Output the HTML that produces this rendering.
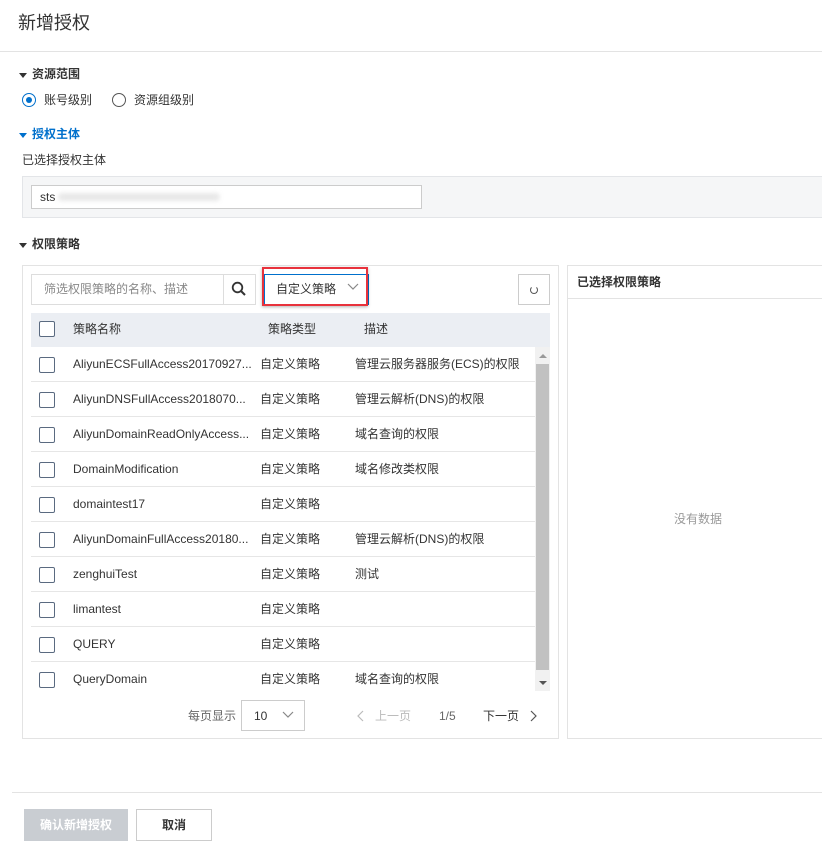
<!DOCTYPE html>
<html><head><meta charset="utf-8"><style>
*{box-sizing:border-box;margin:0;padding:0}
body{width:822px;height:846px;background:#fff;font-family:"Liberation Sans","Noto Sans CJK SC",sans-serif;font-size:12px;color:#333;position:relative;overflow:hidden}
.a{position:absolute;white-space:nowrap;line-height:16px}
.tri{position:absolute;width:0;height:0;border-left:4px solid transparent;border-right:4px solid transparent;border-top:5px solid #333}
.cb{position:absolute;width:16px;height:16px;border:1px solid #5a6a80;border-radius:2px;background:#fff}
.row{position:absolute;left:31px;width:504px;height:35px;border-bottom:1px solid #e6e6e6}
.row span{position:absolute;top:0;line-height:35px;height:35px;white-space:nowrap;font-size:12px;color:#333}
</style></head><body>
<div class="a" style="left:18px;top:12px;font-size:18px;line-height:22px;color:#333">新增授权</div>
<div class="a" style="left:0;top:51px;width:822px;height:1px;background:#e3e3e3"></div>

<div class="tri" style="left:19px;top:73px"></div>
<div class="a" style="left:32px;top:66px;font-weight:bold;font-size:12px">资源范围</div>
<div class="a" style="left:22px;top:93px;width:14px;height:14px;border:1px solid #0070cc;border-radius:50%"></div>
<div class="a" style="left:26px;top:97px;width:6px;height:6px;background:#0070cc;border-radius:50%"></div>
<div class="a" style="left:44px;top:92px">账号级别</div>
<div class="a" style="left:112px;top:93px;width:14px;height:14px;border:1px solid #555;border-radius:50%"></div>
<div class="a" style="left:134px;top:92px">资源组级别</div>

<div class="tri" style="left:19px;top:133px;border-top-color:#0070cc"></div>
<div class="a" style="left:32px;top:126px;font-weight:bold;color:#0070cc">授权主体</div>
<div class="a" style="left:22px;top:152px">已选择授权主体</div>
<div class="a" style="left:22px;top:176px;width:810px;height:42px;background:#f5f6f7;border:1px solid #e3e5e8"></div>
<div class="a" style="left:31px;top:185px;width:391px;height:24px;background:#fff;border:1px solid #ccc"></div>
<div class="a" style="left:40px;top:189px">sts</div>
<div class="a" style="left:58px;top:193px;width:162px;height:8px;background:#e8e8e8;border-radius:4px;filter:blur(2px)"></div>

<div class="tri" style="left:19px;top:243px"></div>
<div class="a" style="left:32px;top:236px;font-weight:bold">权限策略</div>

<div class="a" style="left:22px;top:265px;width:537px;height:474px;border:1px solid #e3e3e3"></div>
<div class="a" style="left:31px;top:274px;width:225px;height:31px;border:1px solid #ddd"></div>
<div class="a" style="left:223px;top:275px;width:1px;height:29px;background:#ddd"></div>
<div class="a" style="left:44px;top:281px;color:#888">筛选权限策略的名称、描述</div>
<svg class="a" style="left:231px;top:281px" width="16" height="16" viewBox="0 0 16 16"><circle cx="6.5" cy="6.5" r="4.8" fill="none" stroke="#333" stroke-width="1.8"/><path d="M10 10l4 4" stroke="#333" stroke-width="2"/></svg>
<div class="a" style="left:264px;top:274px;width:105px;height:31px;border:1px solid #0070cc"></div>
<div class="a" style="left:262px;top:267px;width:106px;height:39px;border:2px solid #e8323c;box-shadow:0 1px 3px rgba(0,0,0,.3)"></div>
<div class="a" style="left:276px;top:281px;color:#333">自定义策略</div>
<svg class="a" style="left:347px;top:283px" width="12" height="8" viewBox="0 0 12 8"><path d="M1 1l5 5 5-5" fill="none" stroke="#888" stroke-width="1.2"/></svg>
<div class="a" style="left:518px;top:274px;width:32px;height:31px;border:1px solid #ccc"></div>
<div class="a" style="left:530px;top:286px;width:8px;height:8px;border:1px solid #555;border-radius:50%;border-top-color:transparent"></div>

<div class="a" style="left:31px;top:313px;width:519px;height:34px;background:#ebeef3"></div>
<div class="cb" style="left:39px;top:321px"></div>
<div class="a" style="left:73px;top:321px">策略名称</div>
<div class="a" style="left:268px;top:321px">策略类型</div>
<div class="a" style="left:364px;top:321px">描述</div>

<div class="row" style="top:347px"><div class="cb" style="left:8px;top:10px"></div><span style="left:42px">AliyunECSFullAccess20170927...</span><span style="left:229px">自定义策略</span><span style="left:324px">管理云服务器服务(ECS)的权限</span></div>
<div class="row" style="top:382px"><div class="cb" style="left:8px;top:10px"></div><span style="left:42px">AliyunDNSFullAccess2018070...</span><span style="left:229px">自定义策略</span><span style="left:324px">管理云解析(DNS)的权限</span></div>
<div class="row" style="top:417px"><div class="cb" style="left:8px;top:10px"></div><span style="left:42px">AliyunDomainReadOnlyAccess...</span><span style="left:229px">自定义策略</span><span style="left:324px">域名查询的权限</span></div>
<div class="row" style="top:452px"><div class="cb" style="left:8px;top:10px"></div><span style="left:42px">DomainModification</span><span style="left:229px">自定义策略</span><span style="left:324px">域名修改类权限</span></div>
<div class="row" style="top:487px"><div class="cb" style="left:8px;top:10px"></div><span style="left:42px">domaintest17</span><span style="left:229px">自定义策略</span></div>
<div class="row" style="top:522px"><div class="cb" style="left:8px;top:10px"></div><span style="left:42px">AliyunDomainFullAccess20180...</span><span style="left:229px">自定义策略</span><span style="left:324px">管理云解析(DNS)的权限</span></div>
<div class="row" style="top:557px"><div class="cb" style="left:8px;top:10px"></div><span style="left:42px">zenghuiTest</span><span style="left:229px">自定义策略</span><span style="left:324px">测试</span></div>
<div class="row" style="top:592px"><div class="cb" style="left:8px;top:10px"></div><span style="left:42px">limantest</span><span style="left:229px">自定义策略</span></div>
<div class="row" style="top:627px"><div class="cb" style="left:8px;top:10px"></div><span style="left:42px">QUERY</span><span style="left:229px">自定义策略</span></div>
<div class="row" style="top:662px;border-bottom:none"><div class="cb" style="left:8px;top:10px"></div><span style="left:42px">QueryDomain</span><span style="left:229px">自定义策略</span><span style="left:324px">域名查询的权限</span></div>

<div class="a" style="left:535px;top:347px;width:15px;height:344px;background:#f1f1f1"></div>
<div class="a" style="left:536px;top:364px;width:13px;height:306px;background:#c1c1c1"></div>
<div class="a" style="left:539px;top:354px;border-left:4px solid transparent;border-right:4px solid transparent;border-bottom:4px solid #999"></div>
<div class="a" style="left:539px;top:681px;border-left:4px solid transparent;border-right:4px solid transparent;border-top:4px solid #555"></div>

<div class="a" style="left:188px;top:708px;color:#666">每页显示</div>
<div class="a" style="left:241px;top:700px;width:64px;height:31px;border:1px solid #ccc"></div>
<div class="a" style="left:254px;top:708px">10</div>
<svg class="a" style="left:282px;top:711px" width="12" height="8" viewBox="0 0 12 8"><path d="M1 1l5 5 5-5" fill="none" stroke="#888" stroke-width="1.2"/></svg>
<svg class="a" style="left:357px;top:710px" width="8" height="12" viewBox="0 0 8 12"><path d="M6 1l-5 5 5 5" fill="none" stroke="#bbb" stroke-width="1.2"/></svg>
<div class="a" style="left:375px;top:708px;color:#bbb">上一页</div>
<div class="a" style="left:439px;top:708px;color:#666">1/5</div>
<div class="a" style="left:483px;top:708px;color:#333">下一页</div>
<svg class="a" style="left:529px;top:710px" width="8" height="12" viewBox="0 0 8 12"><path d="M2 1l5 5-5 5" fill="none" stroke="#555" stroke-width="1.2"/></svg>

<div class="a" style="left:567px;top:265px;width:265px;height:474px;border:1px solid #e3e3e3"></div>
<div class="a" style="left:568px;top:298px;width:254px;height:1px;background:#e3e3e3"></div>
<div class="a" style="left:577px;top:274px;font-weight:bold;color:#333">已选择权限策略</div>
<div class="a" style="left:674px;top:511px;color:#999">没有数据</div>

<div class="a" style="left:12px;top:792px;width:810px;height:1px;background:#e3e3e3"></div>
<div class="a" style="left:24px;top:809px;width:104px;height:32px;background:#c9cdd2;color:#fff;font-weight:bold;text-align:center;line-height:32px">确认新增授权</div>
<div class="a" style="left:136px;top:809px;width:76px;height:32px;border:1px solid #ccc;color:#333;font-weight:bold;text-align:center;line-height:30px">取消</div>
</body></html>
